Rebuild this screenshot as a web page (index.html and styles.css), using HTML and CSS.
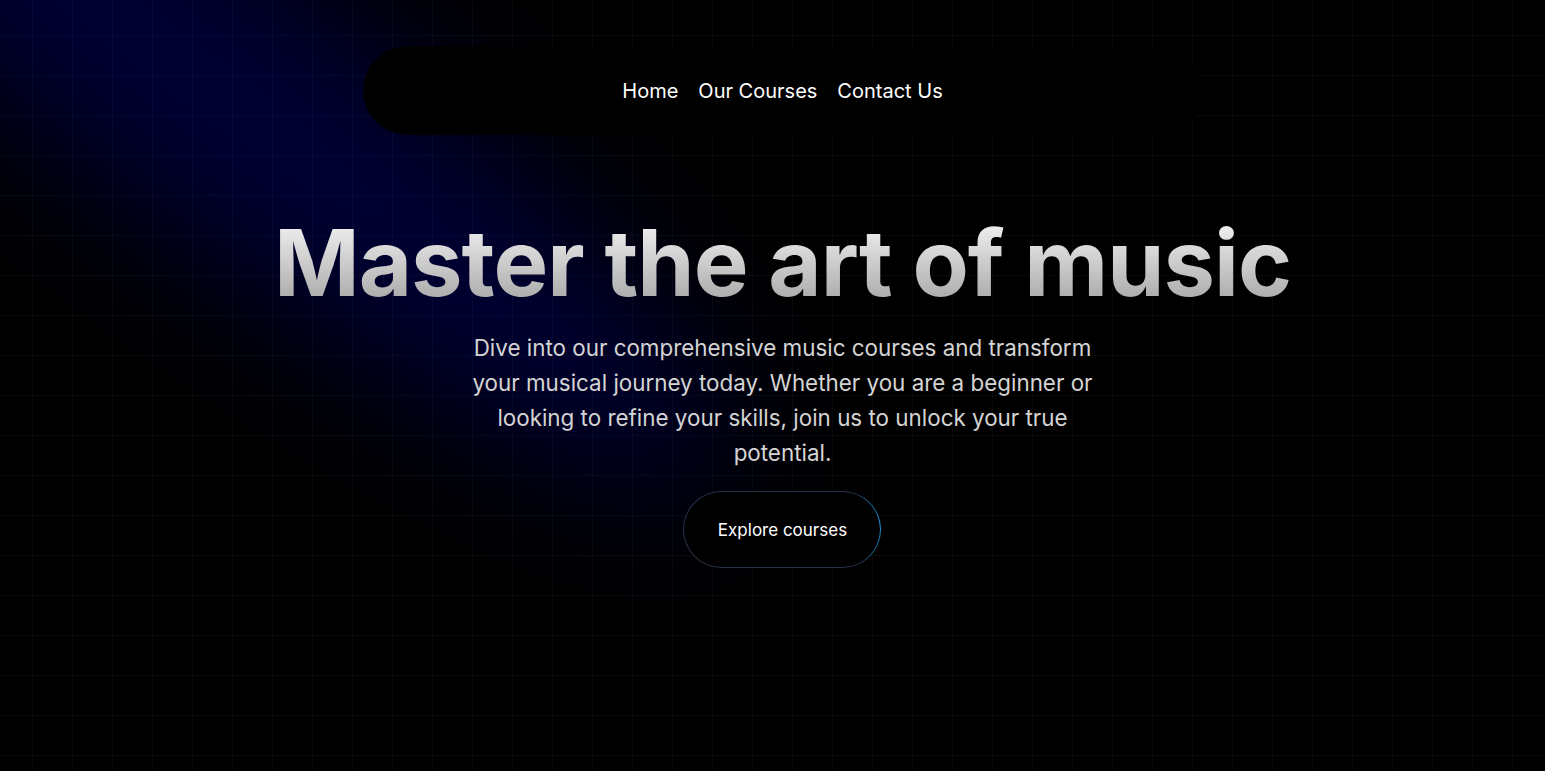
FILE: index.html
```html
<!DOCTYPE html>
<html lang="en">
<head>
<meta charset="utf-8">
<title>Music School</title>
<link rel="stylesheet" href="styles.css">
</head>
<body>
<div class="page">
  <div class="spotlight"></div>
  <div class="content">
    <nav class="nav">
      <a href="#" class="nav-link">Home</a>
      <a href="#" class="nav-link">Our Courses</a>
      <a href="#" class="nav-link">Contact Us</a>
    </nav>
    <section class="hero">
      <h1 class="title">Master the art of music</h1>
      <p class="lead">Dive into our comprehensive music courses and transform your musical journey today. Whether you are a beginner or looking to refine your skills, join us to unlock your true potential.</p>
      <a href="#" class="cta">Explore courses</a>
    </section>
  </div>
</div>
</body>
</html>
```
FILE: styles.css
```css
* { box-sizing: border-box; }
html, body {
  margin: 0;
  padding: 0;
  background: #000;
  height: 100%;
}
body {
  font-family: Inter, "Noto Sans", sans-serif;
  color: #fff;
  overflow: hidden;
}
.page {
  position: relative;
  min-height: 771px;
  background-color: #000;
  background-image:
    linear-gradient(to right, rgba(255,255,255,0.035) 1px, transparent 1px),
    linear-gradient(to bottom, rgba(255,255,255,0.035) 1px, transparent 1px);
  background-size: 40px 40px;
  background-position: 32px 35px;
  overflow: hidden;
}
.spotlight {
  position: absolute;
  left: -500px;
  top: -75px;
  width: 1360px;
  height: 280px;
  border-radius: 50%;
  background: rgba(0, 0, 255, 0.2);
  filter: blur(70px);
  transform: rotate(37deg);
  pointer-events: none;
}
.content {
  position: relative;
  display: flex;
  flex-direction: column;
  align-items: center;
  padding-left: 20px;
  padding-top: 46px;
}
.nav {
  width: 839px;
  height: 89px;
  border-radius: 45px;
  background: #000;
  display: flex;
  align-items: center;
  justify-content: center;
  gap: 20px;
}
.nav-link {
  color: #fff;
  text-decoration: none;
  font-size: 20px;
  font-weight: 400;
}
.hero {
  display: flex;
  flex-direction: column;
  align-items: center;
  padding-top: 82px;
}
.title {
  margin: 0;
  font-size: 92px;
  line-height: 92px;
  font-weight: 700;
  letter-spacing: -1px;
  text-align: center;
  background: linear-gradient(to bottom, #f5f5f5, #a3a3a3);
  -webkit-background-clip: text;
  background-clip: text;
  color: transparent;
}
.lead {
  margin: 21px 0 0;
  max-width: 640px;
  font-size: 22.4px;
  line-height: 35px;
  color: #d4d4d4;
  text-align: center;
}
.cta {
  margin-top: 21px;
  width: 198px;
  height: 77px;
  border-radius: 39px;
  border: 1px solid transparent;
  background:
    linear-gradient(#000, #000) padding-box,
    radial-gradient(ellipse 40px 45px at 100% 45%, #1d9be0 0%, rgba(29,155,224,0.6) 50%, #243044 100%) border-box;
  display: flex;
  align-items: center;
  justify-content: center;
  color: #fff;
  text-decoration: none;
  font-size: 17px;
  font-weight: 400;
}
```
